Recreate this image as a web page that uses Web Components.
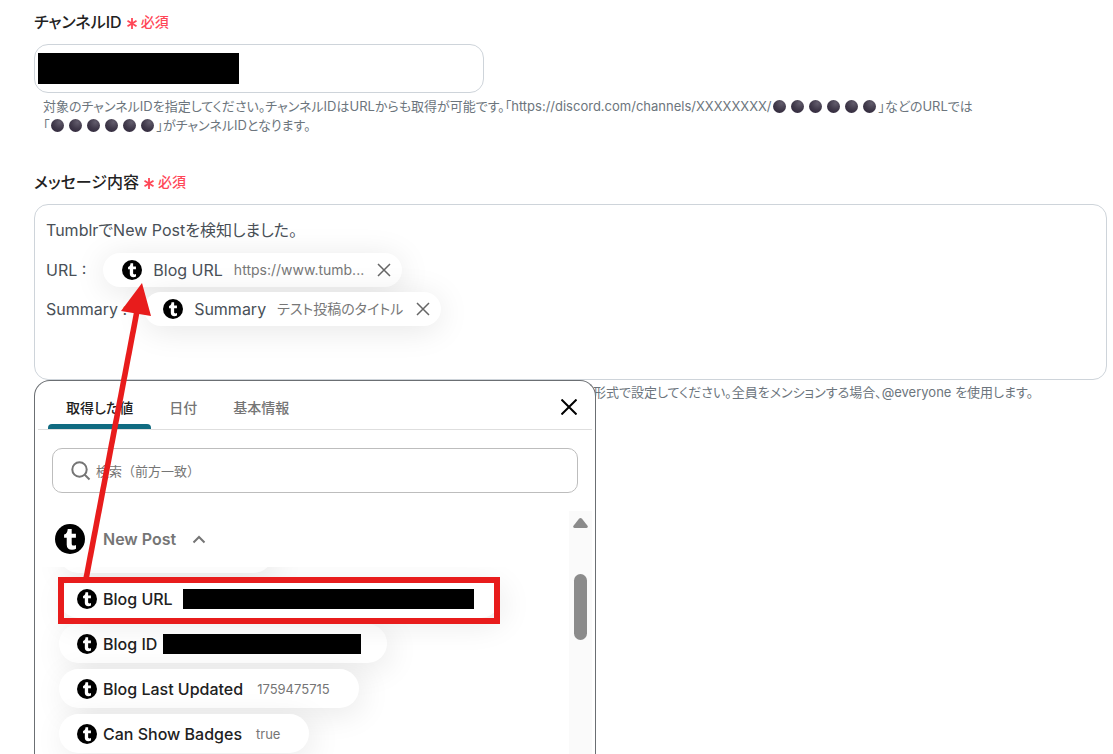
<!DOCTYPE html>
<html lang="ja">
<head>
<meta charset="utf-8">
<meta name="viewport" content="width=device-width, initial-scale=1">
<title>メッセージ設定</title>
<style>
  body {
    margin: 0;
    background: #fff;
    font-family: Inter, "Noto Sans CJK JP", sans-serif;
    font-feature-settings: "palt";
  }
</style>
</head>
<body>
<settings-page></settings-page>

<script>
class BaseElement extends HTMLElement {

  constructor() {
    super();
    this.attachShadow({ mode: "open" });
  }

  connectedCallback() {
    const template = document.createElement("template");
    template.innerHTML = `<style>${this.getStyles()}</style>${this.getMarkup()}`;
    this.shadowRoot.replaceChildren(template.content.cloneNode(true));
    this.ready();
  }

  ready() {}
}

// round tumblr logo, sized by --size
class TumblrMark extends BaseElement {
  getStyles() {
    return `
      :host { display: block; flex: none; width: var(--size, 20px); height: var(--size, 20px); }
      svg { display: block; width: 100%; height: 100%; }
    `;
  }
  getMarkup() {
    return `
      <svg viewBox="0 0 32 32" aria-hidden="true">
        <circle cx="16" cy="16" r="16" fill="#000"/>
        <path fill="#fff" d="M13.6 5.2h4.2v5.2h4.5v4.2h-4.5v6.2c0 1.7.8 2.2 2.2 2.2.9 0 1.7-.2 2.4-.6v4.1c-1.2.7-2.5 1-4.2 1-3.700 0-5.700-1.900-5.700-5.400v-7.500H9.700v-3.400c2.500-.8 3.700-2.600 3.900-6z"/>
      </svg>
    `;
  }
}
customElements.define("tumblr-mark", TumblrMark);

class DarkMoons extends BaseElement {
  getStyles() {
    return `
      :host { display: inline-flex; gap: 5px; padding: 0 3px 0 1px; vertical-align: -2px; }
      i { width: 13px; height: 13px; border-radius: 50%;
          background: radial-gradient(circle at 65% 25%, #625c6c, #40394a 50%, #2a2136); }
    `;
  }
  getMarkup() {
    return "<i></i>".repeat(6);
  }
}
customElements.define("dark-moons", DarkMoons);

class RequiredLabel extends BaseElement {
  getStyles() {
    return `
      :host { display: flex; align-items: center; gap: 4px; height: 24px;
              color: #222; font-size: 16px; font-weight: 500; line-height: 24px; }
      .required { display: flex; gap: 3px; color: #ff4757; font-size: 14px; }
      svg { width: 12px; height: 24px; }
    `;
  }
  getMarkup() {
    return `
      <slot></slot>
      <span class="required">
        <svg viewBox="0 0 12 24" fill="none" stroke="currentColor" stroke-width="1.8" aria-hidden="true">
          <path d="M6 8v11M1.500 10.800l9 5.400M10.500 10.800l-9 5.400"/>
        </svg>
        必須
      </span>
    `;
  }
}
customElements.define("required-label", RequiredLabel);

class HelpText extends BaseElement {
  getStyles() {
    return `
      :host { display: block; color: #6c757d; font-size: 13px; line-height: 19px; }
    `;
  }
  getMarkup() {
    return `<slot></slot>`;
  }
}
customElements.define("help-text", HelpText);

class ChannelField extends BaseElement {
  getStyles() {
    return `
      :host { display: block; }
      .box { box-sizing: border-box; display: flex; align-items: center; max-width: 450px; height: 49px;
             margin: 10px 0 4px; padding: 0 3px; border: 1px solid #ced4da; border-radius: 14px; }
      .mask { flex: none; width: 201px; height: 31px; background: #000; }
      input { flex: 1; min-width: 0; height: 32px; border: 0; outline: 0; background: none; font: inherit; }
      help-text { padding-left: 9px; }
    `;
  }
  getMarkup() {
    return `
      <label for="channel"><required-label>チャンネルID</required-label></label>
      <div class="box"><span class="mask"></span><input id="channel" type="text"></div>
      <help-text>対象のチャンネルIDを指定してください。チャンネルIDはURLからも取得が可能です。「https://discord.com/channels/XXXXXXXX/<dark-moons></dark-moons>」などのURLでは<br>「<dark-moons></dark-moons>」がチャンネルIDとなります。</help-text>
    `;
  }
}
customElements.define("channel-field", ChannelField);

class MessageChip extends BaseElement {
  getStyles() {
    return `
      :host { display: flex; align-items: center; box-sizing: border-box; height: 34px;
              padding: 0 11px 0 19px; border-radius: 17px; background: #fff;
              box-shadow: 0 4px 32px rgba(0, 0, 0, .1); color: #495057; font-size: 16px; }
      .value { margin: 0 13px 0 11px; color: #777; font-size: 14px; }
      .name { margin-left: 11px; }
      button { display: block; padding: 0; border: 0; background: none; color: #666; }
      svg { display: block; width: 14px; height: 14px; }
    `;
  }
  getMarkup() {
    return `
      <tumblr-mark></tumblr-mark>
      <span class="name"><slot></slot></span>
      <span class="value"><slot name="value"></slot></span>
      <button type="button" aria-label="削除">
        <svg viewBox="0 0 14 14" fill="none" stroke="currentColor" stroke-width="1.5"><path d="M1 1l12 12M13 1L1 13"/></svg>
      </button>
    `;
  }
}
customElements.define("message-chip", MessageChip);

class MessageField extends BaseElement {
  getStyles() {
    return `
      :host { display: block; }
      .editor { box-sizing: border-box; min-height: 176px; margin-top: 10px; padding: 8px 11px;
                border: 1px solid #ced4da; border-radius: 14px; outline: 0;
                color: #495057; font-size: 16px; line-height: 34px; }
      p { margin: 0 0 6px; }
      .row { display: flex; align-items: center; gap: 17px; margin-top: 5px; }
    `;
  }
  getMarkup() {
    return `
      <required-label id="message-label">メッセージ内容</required-label>
      <div class="editor" role="textbox" aria-multiline="true" aria-labelledby="message-label" contenteditable="true" spellcheck="false">
        <p>TumblrでNew Postを検知しました。</p>
        <div class="row"><span>URL :</span>
          <message-chip>Blog URL<span slot="value">https://www.tumb...</span></message-chip></div>
        <div class="row"><span>Summary :</span>
          <message-chip>Summary<span slot="value">テスト投稿のタイトル</span></message-chip></div>
      </div>
    `;
  }
}
customElements.define("message-field", MessageField);

// one selectable value in the picker list
class ValueItem extends BaseElement {
  getStyles() {
    return `
      :host { display: block; }
      button { display: flex; align-items: center; box-sizing: border-box; height: 39px; padding: 0 29px 0 18px;
               border: 0; border-radius: 20px; background: #fff; box-shadow: 4px 6px 32px rgba(0, 0, 0, .09);
               color: #212121; font: inherit; font-size: 16px; font-weight: 500; }
      .name { margin-left: 6px; white-space: nowrap; }
      ::slotted([slot="value"]) { margin-left: 14px; color: #757575; font-size: 13px; font-weight: 400; }
      .mask { height: 20px; background: #000; }
      :host([mask]) button { padding-right: 26px; }
      :host([mask="long"]) .mask { width: 291px; margin-left: 10px; }
      :host([mask="short"]) .mask { width: 198px; margin-left: 6px; }
      :host([blank]) button { width: 214px; }
      :host([blank]) tumblr-mark { display: none; }
      :host([marked]) { position: relative; }
      .frame { display: none; }
      :host([marked]) .frame { display: block; position: absolute; inset: -2px auto -6px -1px;
                               width: 430px; border: 6px solid #e81c1c; }
    `;
  }
  getMarkup() {
    return `
      <button type="button">
        <tumblr-mark></tumblr-mark>
        <span class="name"><slot></slot></span>
        <slot name="value"></slot>
        <span class="mask"></span>
      </button>
      <div class="frame"></div>
    `;
  }
}
customElements.define("value-item", ValueItem);

class ValuePicker extends BaseElement {
  getStyles() {
    return `
      :host { display: flex; flex-direction: column; box-sizing: border-box; min-height: 0; overflow: hidden;
              padding: 0 3px; border: 1px solid #6b6f73; border-bottom: 0; border-radius: 16px 16px 0 0;
              background: #fff; }
      button { font: inherit; padding: 0; border: 0; background: none; }
      nav { display: flex; flex: none; height: 48px; padding: 0 15px 0 10px; border-bottom: 1px solid #dedede; }
      nav .tab { position: relative; padding: 3px 18px 0; color: #757575; font-size: 14px; font-weight: 500; }
      nav .tab[aria-selected="true"] { color: #212121; }
      nav .tab[aria-selected="true"]::after { content: ""; position: absolute; inset: auto 0 0;
              height: 5px; border-radius: 4px 4px 0 0; background: #106b81; }
      .close { margin-left: auto; padding-top: 4px; color: #000; }
      .close svg { display: block; width: 16px; height: 16px; }
      .search { display: flex; flex: none; align-items: center; gap: 5px; box-sizing: border-box; height: 45px;
                margin: 18px 14px; padding: 0 18px; border: 1px solid #bdbdbd; border-radius: 10px; color: #757575; }
      .search svg { flex: none; width: 20px; height: 20px; }
      input { flex: 1; min-width: 0; padding: 0; border: 0; outline: 0; background: none; font: inherit;
              font-size: 13px; font-feature-settings: normal; }
      input::placeholder { color: #757575; }
      .body { display: grid; flex: 1; grid-template-columns: 1fr 23px; min-height: 0; }
      .main { display: flex; flex-direction: column; min-width: 0; min-height: 0; }
      .group { --size: 30px; display: flex; flex: none; align-items: center; height: 56px; padding-left: 17px;
               color: #757575; font-size: 16px; font-weight: 600; }
      .group span { margin: 0 16px 0 18px; }
      .group svg { width: 14px; height: 12px; }
      .list { display: flex; flex: 1; flex-direction: column; align-items: flex-start; gap: 6px; min-height: 0;
              margin: 0; padding: 0 0 24px 21px; overflow: hidden; }
      .list value-item { flex: none; }
      .bar { display: flex; flex-direction: column; align-items: center; gap: 46px; padding-top: 7px; background: #fafafa; }
      .bar svg { width: 15px; height: 10px; }
      .thumb { width: 13px; height: 66px; border-radius: 7px; background: #8b8b8b; }
    `;
  }
  getMarkup() {
    return `
      <nav role="tablist">
        <button type="button" class="tab" role="tab" aria-selected="true">取得した値</button>
        <button type="button" class="tab" role="tab">日付</button>
        <button type="button" class="tab" role="tab">基本情報</button>
        <button type="button" class="close" aria-label="閉じる">
          <svg viewBox="0 0 16 16" fill="none" stroke="currentColor" stroke-width="2"><path d="M.5.5l15 15M15.500.5l-15 15"/></svg>
        </button>
      </nav>
      <label class="search">
        <svg viewBox="0 0 20 20" fill="none" stroke="currentColor" stroke-width="2"><circle cx="8.500" cy="8.500" r="7.200"/><path d="M13.500 13.500l5 5"/></svg>
        <input type="text" placeholder="検索（前方一致）" aria-label="検索">
      </label>
      <div class="body">
        <div class="main">
          <button type="button" class="group" aria-expanded="true">
            <tumblr-mark></tumblr-mark><span>New Post</span>
            <svg viewBox="0 0 14 12" fill="none" stroke="currentColor" stroke-width="2"><path d="M1.500 9.500L7 4l5.500 5.500"/></svg>
          </button>
          <div class="list">
            <value-item blank></value-item>
            <value-item mask="long" marked>Blog URL</value-item>
            <value-item mask="short">Blog ID</value-item>
            <value-item>Blog Last Updated<span slot="value">1759475715</span></value-item>
            <value-item>Can Show Badges<span slot="value">true</span></value-item>
          </div>
        </div>
        <div class="bar">
          <svg viewBox="0 0 15 10" fill="#8b8b8b"><path d="M6 .8q1.500-1.600 3 0l5.500 7q1 1.700-1 2.200h-12q-2-.5-1-2.200z"/></svg>
          <div class="thumb"></div>
        </div>
      </div>
    `;
  }
  ready() {
    // the first entry is mostly scrolled out of the list
    this.shadowRoot.querySelector(".list").scrollTop = 33;
  }
}
customElements.define("value-picker", ValuePicker);

class CalloutArrow extends BaseElement {
  getStyles() {
    return `
      :host { position: absolute; left: 80px; top: 280px; width: 75px; height: 300px; pointer-events: none; }
      svg { display: block; width: 100%; height: 100%; }
    `;
  }
  getMarkup() {
    return `
      <svg viewBox="0 0 75 300" aria-hidden="true">
        <path d="M6 299L57 31" stroke="#e81c1c" stroke-width="5.600"/>
        <path d="M62 3L41 31l30 5z" fill="#e81c1c"/>
      </svg>
    `;
  }
}
customElements.define("callout-arrow", CalloutArrow);

class SettingsPage extends BaseElement {
  getStyles() {
    return `
      :host { position: relative; display: flex; flex-direction: column; box-sizing: border-box; height: 100vh;
              padding: 10px 6px 0 34px; overflow: hidden; }
      message-field { margin-top: 35px; }
      .below { display: grid; flex: 1; grid-template-columns: 562px 1fr; min-height: 0; }
      .below help-text { padding-top: 3px; margin-left: -3px; }
      value-picker { z-index: 1; }
      callout-arrow { z-index: 2; }
    `;
  }
  getMarkup() {
    return `
      <channel-field></channel-field>
      <message-field></message-field>
      <div class="below">
        <value-picker></value-picker>
        <help-text>形式で設定してください。全員をメンションする場合、@everyone を使用します。</help-text>
      </div>
      <callout-arrow></callout-arrow>
    `;
  }
}
customElements.define("settings-page", SettingsPage);
</script>
</body>
</html>
